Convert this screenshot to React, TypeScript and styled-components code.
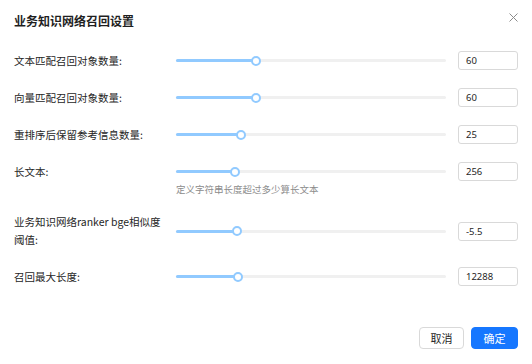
import styled, { createGlobalStyle } from "styled-components";

const GlobalStyle = createGlobalStyle`
  body {
    margin: 0;
    background: #fff;
    font-family: "Noto Sans CJK SC", "Noto Sans", "Liberation Sans", sans-serif;
    color: #262626;
  }
`;

const Dialog = styled.div`
  width: 532px;
  height: 364px;
  box-sizing: border-box;
  padding: 13px 14px 0;
  display: flex;
  flex-direction: column;
  background: #fff;
`;

const Header = styled.header`
  display: flex;
  align-items: center;
  justify-content: space-between;
  height: 16px;
`;

const Title = styled.h1`
  margin: 0;
  font-size: 12px;
  line-height: 16px;
  font-weight: 700;
  color: #1f1f1f;
`;

const CloseBtn = styled.button`
  border: none;
  background: transparent;
  padding: 0;
  margin-right: -1px;
  margin-top: -8px;
  width: 11px;
  height: 11px;
  display: flex;
  align-items: center;
  justify-content: center;
  cursor: pointer;
`;

const Form = styled.div`
  display: flex;
  flex-direction: column;
  gap: 18px;
  margin-top: 22px;
`;

const Row = styled.div`
  display: grid;
  grid-template-columns: 150px 270px 60px;
  column-gap: 12px;
  align-items: start;
`;

const Label = styled.label<{ $tall?: boolean }>`
  font-size: 10.5px;
  line-height: ${(p) => (p.$tall ? "18px" : "19px")};
  color: #262626;
`;

const SliderCell = styled.div<{ $tall?: boolean }>`
  display: flex;
  flex-direction: column;
  padding-top: ${(p) => (p.$tall ? "8.5px" : "0")};
`;

const Slider = styled.div`
  position: relative;
  height: 19px;
`;

const Rail = styled.div`
  position: absolute;
  left: 0;
  right: 0;
  top: 8px;
  height: 3px;
  border-radius: 2px;
  background: #f0f0f0;
`;

const Track = styled.div`
  position: absolute;
  left: 0;
  top: 8px;
  height: 3px;
  border-radius: 2px;
  background: #91caff;
`;

const Thumb = styled.div`
  position: absolute;
  top: 4.5px;
  width: 10px;
  height: 10px;
  margin-left: -5px;
  box-sizing: border-box;
  border-radius: 50%;
  background: #fff;
  border: 2px solid #91caff;
`;

const Helper = styled.div`
  margin-top: 2px;
  font-size: 9.5px;
  line-height: 12px;
  color: #8c8c8c;
`;

const NumInput = styled.input<{ $tall?: boolean }>`
  width: 60px;
  height: 19px;
  box-sizing: border-box;
  margin: ${(p) => (p.$tall ? "8.5px 0 0" : "0")};
  padding: 0 7px;
  border: 1px solid #d9d9d9;
  border-radius: 3px;
  font-family: "Noto Sans", "Liberation Sans", sans-serif;
  font-size: 9.5px;
  color: #262626;
  outline: none;
`;

const Footer = styled.footer`
  margin-top: auto;
  margin-bottom: 15px;
  display: flex;
  justify-content: flex-end;
  gap: 7px;
`;

const Button = styled.button<{ $primary?: boolean }>`
  height: 22px;
  padding: 0 ${(p) => (p.$primary ? "11.5px" : "10.5px")};
  border-radius: 4px;
  font-family: "Noto Sans CJK SC", sans-serif;
  font-size: 11px;
  line-height: 20px;
  cursor: pointer;
  border: 1px solid ${(p) => (p.$primary ? "#1677ff" : "#d9d9d9")};
  background: ${(p) => (p.$primary ? "#1677ff" : "#fff")};
  color: ${(p) => (p.$primary ? "#fff" : "#262626")};
`;

interface Setting {
  label: string;
  value: string;
  pct: number;
  helper?: string;
  tall?: boolean;
}

const settings: Setting[] = [
  { label: "文本匹配召回对象数量:", value: "60", pct: 29.6 },
  { label: "向量匹配召回对象数量:", value: "60", pct: 29.6 },
  { label: "重排序后保留参考信息数量:", value: "25", pct: 24.1 },
  {
    label: "长文本:",
    value: "256",
    pct: 21.9,
    helper: "定义字符串长度超过多少算长文本",
  },
  {
    label: "业务知识网络ranker bge相似度阈值:",
    value: "-5.5",
    pct: 22.6,
    tall: true,
  },
  { label: "召回最大长度:", value: "12288", pct: 23 },
];

function App() {
  return (
    <>
      <GlobalStyle />
      <Dialog>
        <Header>
          <Title>业务知识网络召回设置</Title>
          <CloseBtn aria-label="close">
            <svg width="9" height="9" viewBox="0 0 9 9">
              <path d="M0.5 0.5 L8.5 8.5 M8.5 0.5 L0.5 8.5" stroke="#8c8c8c" strokeWidth="1" />
            </svg>
          </CloseBtn>
        </Header>

        <Form>
          {settings.map((s) => (
            <Row key={s.label}>
              <Label $tall={s.tall}>{s.label}</Label>
              <SliderCell $tall={s.tall}>
                <Slider>
                  <Rail />
                  <Track style={{ width: `${s.pct}%` }} />
                  <Thumb style={{ left: `${s.pct}%` }} />
                </Slider>
                {s.helper && <Helper>{s.helper}</Helper>}
              </SliderCell>
              <NumInput $tall={s.tall} defaultValue={s.value} />
            </Row>
          ))}
        </Form>

        <Footer>
          <Button>取消</Button>
          <Button $primary>确定</Button>
        </Footer>
      </Dialog>
    </>
  );
}

export default App;
